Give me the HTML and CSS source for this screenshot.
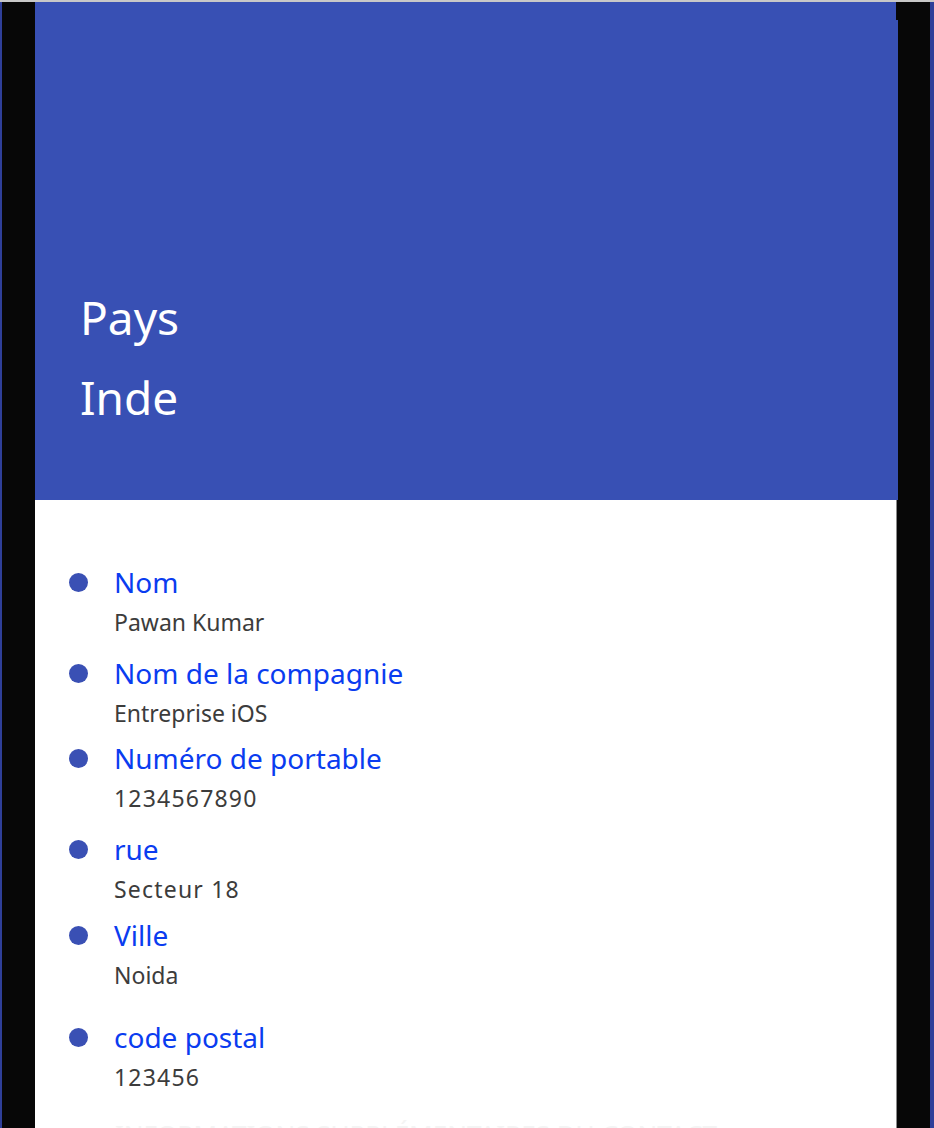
FILE: index.html
```html
<!DOCTYPE html>
<html lang="fr">
<head>
<meta charset="utf-8">
<title>Pays</title>
<link rel="stylesheet" href="styles.css">
</head>
<body>
<div class="topline"></div>
<div class="screen">
  <div class="card">
    <header class="hero">
      <div class="hero-line">Pays</div>
      <div class="hero-line">Inde</div>
    </header>
    <section class="details">
      <ul class="list">
        <li class="item i1"><span class="dot"></span><div class="text"><div class="label">Nom</div><div class="value">Pawan Kumar</div></div></li>
        <li class="item i2"><span class="dot"></span><div class="text"><div class="label">Nom de la compagnie</div><div class="value">Entreprise iOS</div></div></li>
        <li class="item i3"><span class="dot"></span><div class="text"><div class="label">Numéro de portable</div><div class="value num">1234567890</div></div></li>
        <li class="item i4"><span class="dot"></span><div class="text"><div class="label">rue</div><div class="value num">Secteur 18</div></div></li>
        <li class="item i5"><span class="dot"></span><div class="text"><div class="label">Ville</div><div class="value">Noida</div></div></li>
        <li class="item i6"><span class="dot"></span><div class="text"><div class="label">code postal</div><div class="value num">123456</div></div></li>
      </ul>
      <p class="faint">INFORMATIONS SUPPLÉMENTAIRES DU CONTACT</p>
    </section>
  </div>
</div>
</body>
</html>
```
FILE: styles.css
```css
html, body {
  margin: 0;
  padding: 0;
}
body {
  width: 934px;
  height: 1128px;
  overflow: hidden;
  background: #070707;
  font-family: "Noto Sans", "DejaVu Sans", sans-serif;
}
.topline {
  height: 2px;
  background: #c8c8c8;
}
.screen {
  border-left: 2px solid #2f3f99;
  border-right: 4px solid #2f3f99;
  height: 1126px;
  box-sizing: border-box;
  padding-left: 33px;
}
.card {
  width: 863px;
  display: flex;
  flex-direction: column;
}
.hero {
  position: relative;
  height: 498px;
  background: #3850b4;
  box-sizing: border-box;
  padding: 275px 0 0 45px;
  color: #ffffff;
}
.hero::after {
  content: "";
  position: absolute;
  top: 0;
  right: 0;
  width: 2px;
  height: 18px;
  background: #070707;
}
.hero-line {
  font-size: 46px;
  line-height: 80px;
}
.details {
  width: 861px;
  background: #ffffff;
  border-right: 1px solid #8a8a8a;
  height: 628px;
  overflow: hidden;
}
.list {
  list-style: none;
  margin: 0;
  padding: 63px 0 0 34px;
}
.item {
  display: flex;
  align-items: flex-start;
}
.dot {
  width: 19px;
  height: 19px;
  border-radius: 50%;
  background: #3a50b4;
  margin-top: 10px;
  flex: none;
}
.text {
  margin-left: 26px;
}
.label {
  color: #0a3cf0;
  font-size: 28px;
  line-height: 39px;
}
.value {
  color: #3c3c3c;
  font-size: 23px;
  line-height: 41px;
}
.num {
  letter-spacing: 1.2px;
}
.i2 { margin-top: 11px; }
.i3 { margin-top: 5px; }
.i4 { margin-top: 11px; }
.i5 { margin-top: 6px; }
.i6 { margin-top: 22px; }
.faint {
  margin: 21px 0 0 80px;
  color: #f4f4f4;
  font-size: 26px;
  line-height: 30px;
  white-space: nowrap;
}
```
